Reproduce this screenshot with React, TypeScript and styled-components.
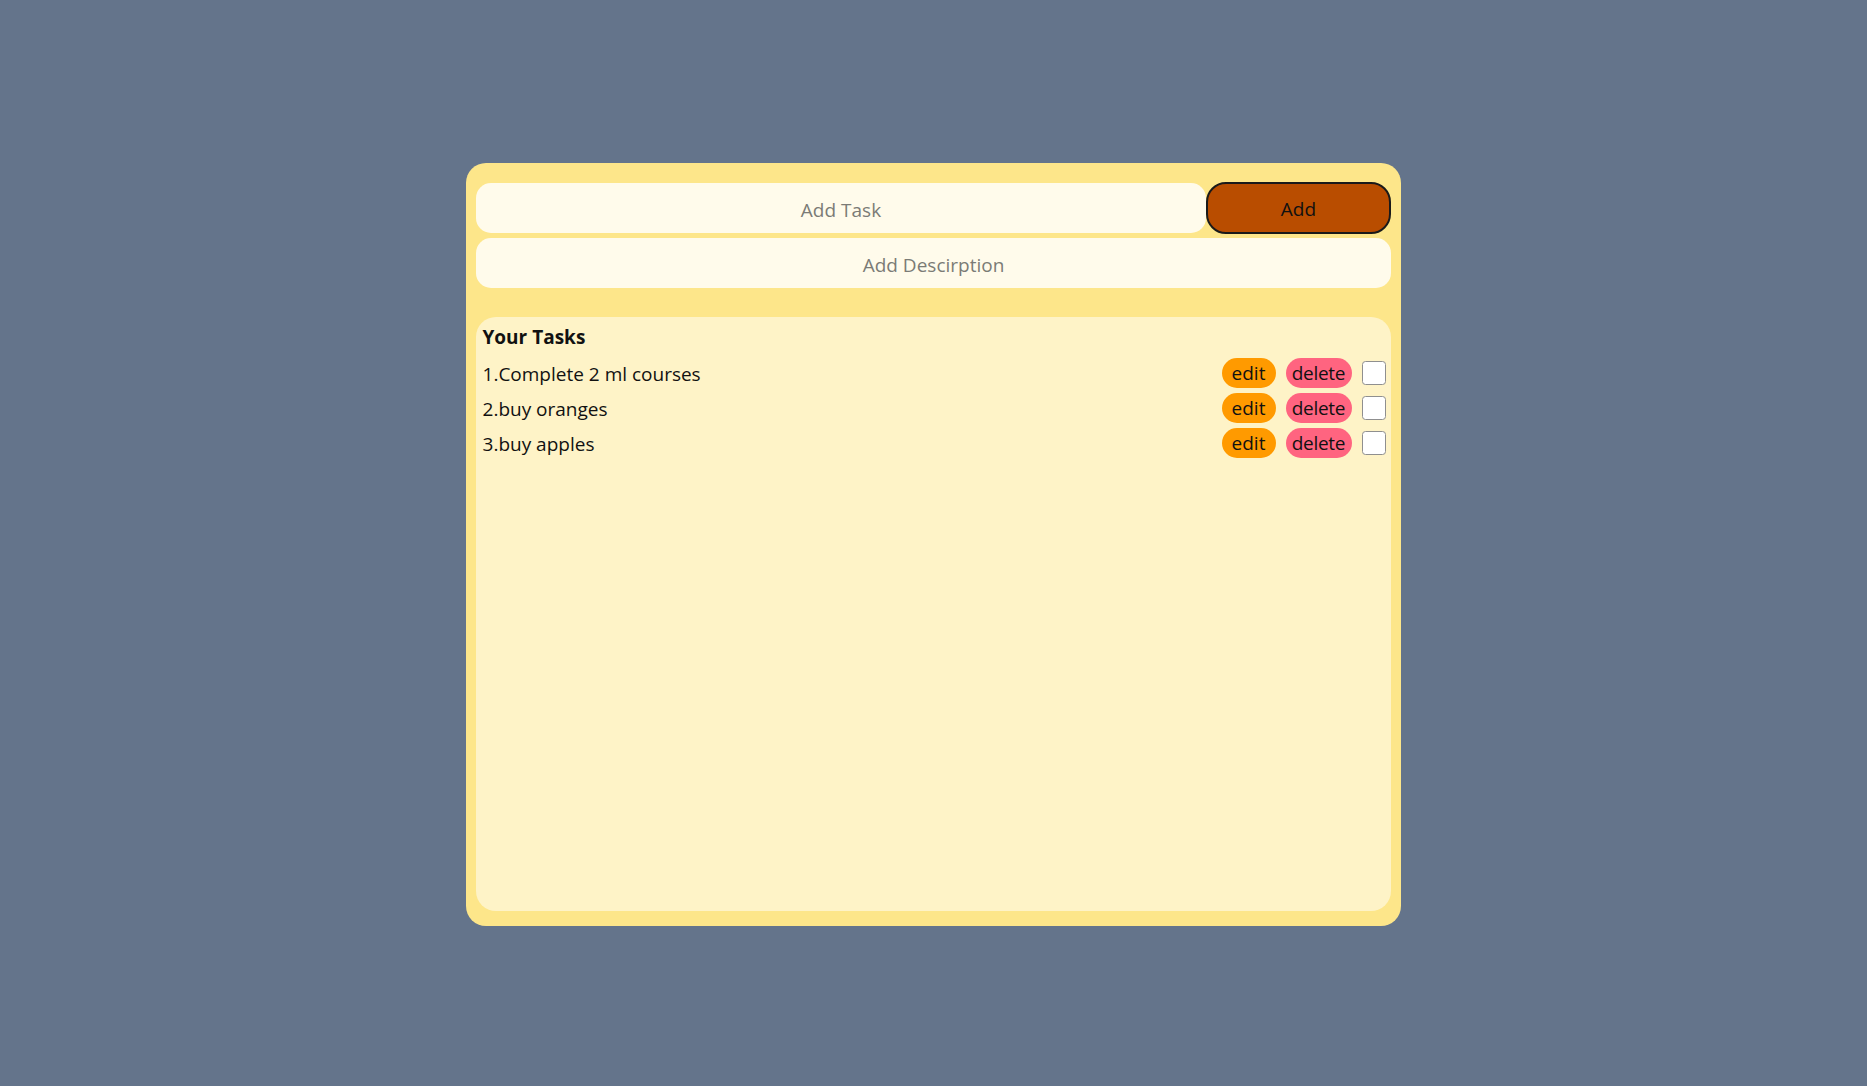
import React, { useState } from "react";
import styled, { createGlobalStyle, css } from "styled-components";

const GlobalStyle = createGlobalStyle`
  body {
    margin: 0;
    background-color: #64748b;
    font-family: "Open Sans", "Noto Sans", sans-serif;
    color: #111111;
  }
`;

const Page = styled.div`
  min-height: 100vh;
  display: flex;
  justify-content: center;
  align-items: flex-start;
  padding-top: 163px;
  box-sizing: border-box;
`;

const Card = styled.div`
  width: 935px;
  height: 763px;
  box-sizing: border-box;
  display: flex;
  flex-direction: column;
  padding: 19px 10px 15px;
  background-color: #fde68a;
  border-radius: 20px;
`;

const InputRow = styled.div`
  display: flex;
  align-items: center;
  height: 52px;
`;

const Field = styled.input`
  height: 50px;
  box-sizing: border-box;
  padding: 3px 0 0;
  border: none;
  outline: none;
  border-radius: 15px;
  background-color: #fffbeb;
  text-align: center;
  font-family: inherit;
  font-size: 19px;
  color: #111111;

  &::placeholder {
    color: #7b7b76;
  }
`;

const TaskField = styled(Field)`
  flex: 1;
  min-width: 0;
`;

const DescriptionField = styled(Field)`
  width: 100%;
  margin-top: 4px;
`;

const AddButton = styled.button`
  width: 185px;
  height: 52px;
  box-sizing: border-box;
  padding: 2px 0 0;
  border: 2px solid #1a1a1a;
  border-radius: 20px;
  background-color: #b94d00;
  font-family: inherit;
  font-size: 19px;
  color: #111111;
  cursor: pointer;
`;

const TaskPanel = styled.div`
  flex: 1;
  margin-top: 29px;
  padding: 6px 5px 0 6.5px;
  background-color: #fef3c7;
  border-radius: 20px;
`;

const Heading = styled.div`
  font-size: 19px;
  font-weight: 700;
  line-height: 28px;
`;

const TaskList = styled.div`
  display: flex;
  flex-direction: column;
  gap: 5.5px;
  margin-top: 7px;
`;

const TaskRow = styled.div`
  display: flex;
  align-items: center;
  gap: 10px;
  height: 29.5px;
`;

const TaskTitle = styled.span`
  flex: 1;
  font-size: 19px;
  padding-top: 2px;
`;

const Pill = styled.button<{ $tone: "edit" | "delete" }>`
  height: 29.5px;
  padding: 1px 0 0;
  border: none;
  border-radius: 15px;
  font-family: inherit;
  font-size: 19px;
  line-height: 28px;
  color: #111111;
  text-align: center;
  cursor: pointer;
  ${({ $tone }) =>
    $tone === "edit"
      ? css`
          background-color: #ff9a00;
          width: 54px;
        `
      : css`
          background-color: #ff6480;
          width: 66px;
          letter-spacing: -0.3px;
        `}
`;

const Check = styled.input.attrs({ type: "checkbox" })`
  appearance: none;
  margin: 0;
  width: 24.5px;
  height: 24.5px;
  box-sizing: border-box;
  border: 1.5px solid #8f8f8f;
  border-radius: 3.5px;
  background-color: #ffffff;
  cursor: pointer;

  &:checked {
    background-color: #1a73e8;
    border-color: #1a73e8;
  }
`;

const initialTasks = [
  { id: 1, title: "Complete 2 ml courses", done: false },
  { id: 2, title: "buy oranges", done: false },
  { id: 3, title: "buy apples", done: false },
];

const App = () => {
  const [tasks, setTasks] = useState(initialTasks);
  const [title, setTitle] = useState("");
  const [description, setDescription] = useState("");

  const addTask = () => {
    if (!title.trim()) return;
    setTasks([...tasks, { id: Date.now(), title, done: false }]);
    setTitle("");
    setDescription("");
  };

  return (
    <>
      <GlobalStyle />
      <Page>
        <Card>
          <InputRow>
            <TaskField
              placeholder="Add Task"
              value={title}
              onChange={(e) => setTitle(e.target.value)}
            />
            <AddButton onClick={addTask}>Add</AddButton>
          </InputRow>
          <DescriptionField
            placeholder="Add Descirption"
            value={description}
            onChange={(e) => setDescription(e.target.value)}
          />
          <TaskPanel>
            <Heading>Your Tasks</Heading>
            <TaskList>
              {tasks.map((task, i) => (
                <TaskRow key={task.id}>
                  <TaskTitle>
                    {i + 1}.{task.title}
                  </TaskTitle>
                  <Pill $tone="edit">edit</Pill>
                  <Pill
                    $tone="delete"
                    onClick={() => setTasks(tasks.filter((t) => t.id !== task.id))}
                  >
                    delete
                  </Pill>
                  <Check
                    checked={task.done}
                    onChange={() =>
                      setTasks(
                        tasks.map((t) =>
                          t.id === task.id ? { ...t, done: !t.done } : t
                        )
                      )
                    }
                  />
                </TaskRow>
              ))}
            </TaskList>
          </TaskPanel>
        </Card>
      </Page>
    </>
  );
};

export default App;
